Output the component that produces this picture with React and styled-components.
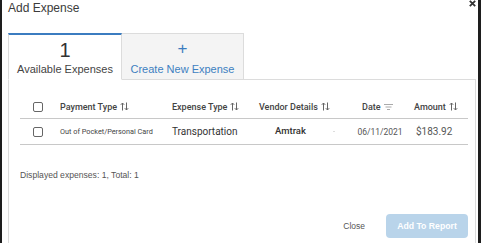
import React from "react";
import styled, { createGlobalStyle } from "styled-components";

const GlobalStyle = createGlobalStyle`
  html, body {
    margin: 0;
    padding: 0;
    background: #fff;
    font-family: "Liberation Sans", Arial, sans-serif;
  }
  * {
    box-sizing: border-box;
  }
`;

const columns = [
  { key: "payment", label: "Payment Type", sort: "arrows" },
  { key: "expense", label: "Expense Type", sort: "arrows" },
  { key: "vendor", label: "Vendor Details", sort: "arrows" },
  { key: "date", label: "Date", sort: "filter" },
  { key: "amount", label: "Amount", sort: "arrows" },
];

const expenses = [
  {
    payment: "Out of Pocket/Personal Card",
    expense: "Transportation",
    vendor: "Amtrak",
    date: "06/11/2021",
    amount: "$183.92",
  },
];

function SortArrows() {
  return (
    <svg width="9" height="9" viewBox="0 0 9 9" fill="none" stroke="#666" strokeWidth="1">
      <path d="M2.5 8.5V1M0.8 2.8L2.5 1L4.2 2.8" />
      <path d="M6.5 0.5V8M4.8 6.2L6.5 8L8.2 6.2" />
    </svg>
  );
}

function FilterLines() {
  return (
    <svg width="9" height="8" viewBox="0 0 9 8" fill="none" stroke="#aaa" strokeWidth="1">
      <path d="M0 1.5H9M1.5 4H7.5M3 6.5H6" />
    </svg>
  );
}

function CloseIcon() {
  return (
    <svg width="7" height="7" viewBox="0 0 7 7" fill="none" stroke="#333" strokeWidth="1.8">
      <path d="M0.8 0.8L6.2 6.2M6.2 0.8L0.8 6.2" />
    </svg>
  );
}

function App() {
  return (
    <>
      <GlobalStyle />
      <Dialog>
        <Header>
          <Title>Add Expense</Title>
          <CloseX aria-label="Close">
            <CloseIcon />
          </CloseX>
        </Header>
        <Tabs>
          <Tab active>
            <TabCount>1</TabCount>
            <TabLabel>Available Expenses</TabLabel>
          </Tab>
          <Tab>
            <TabPlus>+</TabPlus>
            <TabLabel blue>Create New Expense</TabLabel>
          </Tab>
        </Tabs>
        <Panel>
          <Table>
            <HeadRow>
              <CheckCell>
                <Checkbox />
              </CheckCell>
              {columns.map((c) => (
                <HeadCell key={c.key}>
                  {c.label}
                  {c.sort === "arrows" ? <SortArrows /> : <FilterLines />}
                </HeadCell>
              ))}
            </HeadRow>
            {expenses.map((e, i) => (
              <BodyRow key={i}>
                <CheckCell>
                  <Checkbox />
                </CheckCell>
                <PaymentCell>{e.payment}</PaymentCell>
                <ExpenseCell>{e.expense}</ExpenseCell>
                <VendorCell>
                  {e.vendor}
                  <Dot />
                </VendorCell>
                <DateCell>{e.date}</DateCell>
                <Cell>{e.amount}</Cell>
              </BodyRow>
            ))}
          </Table>
          <Summary>Displayed expenses: 1, Total: 1</Summary>
          <Footer>
            <CloseButton>Close</CloseButton>
            <PrimaryButton disabled>Add To Report</PrimaryButton>
          </Footer>
        </Panel>
      </Dialog>
    </>
  );
}

export default App;

const Dialog = styled.div`
  position: relative;
  height: 243px;
  overflow: hidden;
  border-left: 2px solid #1e1e1e;
  border-right: 3px solid #1e1e1e;
  padding: 0 0 0 6px;
  display: flex;
  flex-direction: column;
`;
const Header = styled.div`
  height: 33px;
  display: flex;
  align-items: flex-start;
`;
const Title = styled.div`
  font-size: 12px;
  line-height: 16px;
  color: #3b3b3b;
`;
const CloseX = styled.div`
  position: absolute;
  top: 0;
  right: 2px;
  display: flex;
`;
const Tabs = styled.div`
  display: flex;
  position: relative;
  z-index: 1;
`;
const Tab = styled.div`
  width: ${(p) => (p.active ? "114px" : "122px")};
  height: 47px;
  display: flex;
  flex-direction: column;
  align-items: center;
  background: ${(p) => (p.active ? "#fff" : "#f4f4f4")};
  border: 1px solid #dcdcdc;
  border-top: ${(p) => (p.active ? "2px solid #3b7cc0" : "1px solid #dcdcdc")};
  border-bottom: ${(p) => (p.active ? "1px solid #fff" : "1px solid #dcdcdc")};
  border-left: ${(p) => (p.active ? "1px solid #dcdcdc" : "none")};
  padding-top: ${(p) => (p.active ? "5px" : "6px")};
`;
const TabCount = styled.div`
  font-size: 20px;
  line-height: 20px;
  color: #333;
  height: 21px;
`;
const TabPlus = styled.div`
  font-size: 17px;
  line-height: 18px;
  color: #3b7cc0;
  height: 21px;
`;
const TabLabel = styled.div`
  font-size: 11px;
  line-height: 16px;
  color: ${(p) => (p.blue ? "#3d7fc1" : "#444")};
`;
const Panel = styled.div`
  flex: 1;
  margin-top: -1px;
  margin-right: 2px;
  border: 1px solid #dcdcdc;
  border-bottom: none;
  padding: 15px 7px 0 11px;
  display: flex;
  flex-direction: column;
`;
const Table = styled.div`
  display: grid;
  grid-template-columns: 32px 112px 87px 103px 52px 1fr;
  font-family: Roboto, "Liberation Sans", sans-serif;
`;
const HeadRow = styled.div`
  display: contents;
  & > div {
    height: 24px;
    border-bottom: 1px solid #c8c8c8;
  }
`;
const BodyRow = styled.div`
  display: contents;
  & > div {
    height: 26px;
    border-bottom: 1px solid #c8c8c8;
  }
`;
const CheckCell = styled.div`
  display: flex;
  align-items: center;
  padding-left: 13px;
`;
const Checkbox = styled.span`
  width: 10px;
  height: 10px;
  border: 1px solid #666;
  border-radius: 2px;
  background: #fff;
`;
const HeadCell = styled.div`
  display: flex;
  align-items: center;
  gap: 3px;
  padding-left: 8px;
  font-size: 9px;
  font-weight: 500;
  color: #444;
  white-space: nowrap;
`;
const Cell = styled.div`
  display: flex;
  align-items: center;
  justify-content: flex-start;
  padding-left: 10px;
  font-size: 10px;
  color: #555;
  white-space: nowrap;
`;
const DateCell = styled(Cell)`
  justify-content: center;
  padding-left: 0;
  font-size: 8.5px;
`;
const PaymentCell = styled(Cell)`
  padding-left: 8px;
  font-size: 7.3px;
  color: #444;
`;
const ExpenseCell = styled(Cell)`
  padding-left: 8px;
  font-size: 10px;
  color: #333;
`;
const VendorCell = styled(Cell)`
  position: relative;
  padding-left: 24px;
  padding-bottom: 3px;
  font-size: 9.5px;
  font-weight: 500;
  color: #333;
`;
const Dot = styled.span`
  position: absolute;
  left: 82px;
  top: 12px;
  width: 2px;
  height: 1px;
  background: #ddd;
`;
const Summary = styled.div`
  margin-top: 25px;
  font-size: 8.6px;
  color: #555;
`;
const Footer = styled.div`
  margin-top: auto;
  margin-bottom: 5px;
  display: flex;
  justify-content: flex-end;
  align-items: center;
  gap: 21px;
`;
const CloseButton = styled.button`
  border: none;
  background: none;
  padding: 0;
  font-family: "Liberation Sans", Arial, sans-serif;
  font-size: 8.5px;
  color: #555;
`;
const PrimaryButton = styled.button`
  width: 82px;
  height: 24px;
  border: none;
  border-radius: 4px;
  background: #b9d4ea;
  color: #fff;
  font-family: "Liberation Sans", Arial, sans-serif;
  font-size: 8.7px;
  font-weight: bold;
  padding: 0;
`;
